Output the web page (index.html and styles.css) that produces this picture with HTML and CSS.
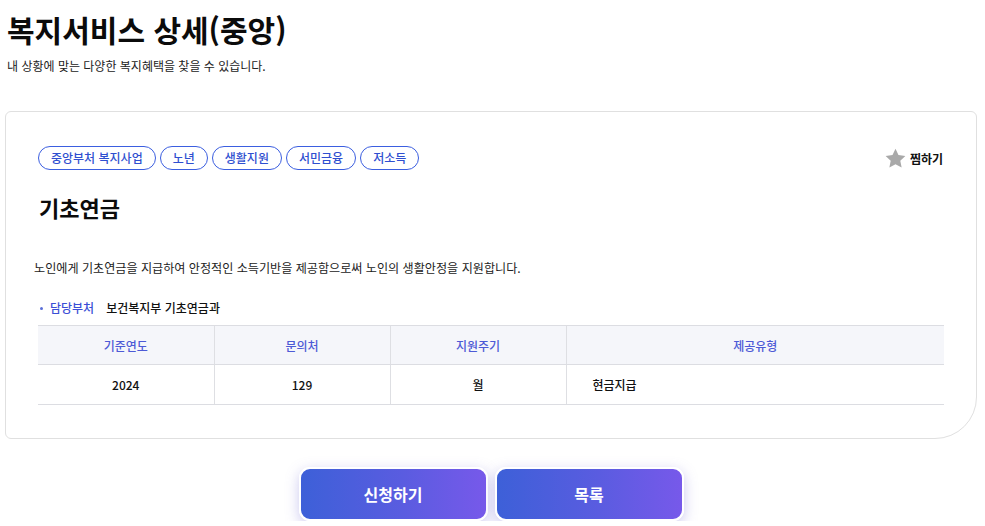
FILE: index.html
```html
<!DOCTYPE html>
<html lang="ko">
<head>
<meta charset="utf-8">
<link rel="stylesheet" href="styles.css">
</head>
<body>
<div class="page">
  <header class="head">
    <h1 class="title">복지서비스 상세(중앙)</h1>
    <p class="subtitle">내 상황에 맞는 다양한 복지혜택을 찾을 수 있습니다.</p>
  </header>
  <section class="card">
    <div class="top-row">
      <ul class="tags">
        <li class="tag">중앙부처 복지사업</li>
        <li class="tag">노년</li>
        <li class="tag">생활지원</li>
        <li class="tag">서민금융</li>
        <li class="tag">저소득</li>
      </ul>
      <button class="fav" type="button">
        <svg class="star" viewBox="0 0 24 24" width="23" height="23"><path d="M12 1.8l3.1 6.6 7.2.9-5.3 5 1.4 7.1L12 17.9l-6.4 3.5 1.4-7.1-5.3-5 7.2-.9z" fill="#a9a9a9"/></svg>
        <span>찜하기</span>
      </button>
    </div>
    <h2 class="name">기초연금</h2>
    <p class="desc">노인에게 기초연금을 지급하여 안정적인 소득기반을 제공함으로써 노인의 생활안정을 지원합니다.</p>
    <div class="dept">
      <span class="dept-label">담당부처</span>
      <span class="dept-value">보건복지부 기초연금과</span>
    </div>
    <table class="info">
      <thead>
        <tr><th>기준연도</th><th>문의처</th><th>지원주기</th><th>제공유형</th></tr>
      </thead>
      <tbody>
        <tr><td>2024</td><td>129</td><td>월</td><td class="left">현금지급</td></tr>
      </tbody>
    </table>
  </section>
  <div class="actions">
    <button class="btn" type="button">신청하기</button>
    <button class="btn" type="button">목록</button>
  </div>
</div>
</body>
</html>
```
FILE: styles.css
```css
* { box-sizing: border-box; }
html, body { margin: 0; padding: 0; background: #fff; }
body {
  font-family: "Noto Sans CJK KR", "Noto Sans", sans-serif;
  color: #111;
}
.page { padding: 0 8px 0 5px; }
.head { padding: 6px 0 0 2px; }
.title {
  margin: 0;
  font-size: 30px;
  line-height: 46px;
  font-weight: 700;
  color: #0b0b0b;
}
.subtitle {
  margin: 5px 0 0;
  font-size: 12px;
  line-height: 17px;
  color: #222;
}
.card {
  margin-top: 37px;
  border: 1px solid #e0e0e0;
  border-radius: 6px 6px 42px 6px;
  padding: 34px 32px 33px 32px;
}
.top-row {
  display: flex;
  align-items: center;
  justify-content: space-between;
}
.tags {
  display: flex;
  gap: 4px;
  list-style: none;
  margin: 0;
  padding: 0;
}
.tag {
  border: 1px solid #3b5ee0;
  border-radius: 12px;
  padding: 0 12px;
  height: 24px;
  line-height: 22px;
  font-size: 12px;
  font-weight: 500;
  color: #2f4fd0;
}
.fav {
  display: flex;
  align-items: center;
  gap: 3px;
  border: 0;
  background: none;
  padding: 0;
  margin-right: 1px;
  font-family: inherit;
  font-size: 12px;
  font-weight: 700;
  color: #111;
}
.name {
  margin: 22px 0 0 1px;
  font-size: 22px;
  line-height: 30px;
  font-weight: 700;
  color: #0b0b0b;
}
.desc {
  margin: 37px 0 0 -4px;
  font-size: 12.1px;
  line-height: 18px;
  color: #222;
}
.dept {
  display: flex;
  align-items: center;
  margin-top: 22px;
  font-size: 12px;
  line-height: 18px;
}
.dept-label {
  position: relative;
  padding-left: 12px;
  font-weight: 500;
  color: #3b4fd6;
}
.dept-label::before {
  content: "";
  position: absolute;
  left: 2px;
  top: 8px;
  width: 3px;
  height: 3px;
  border-radius: 50%;
  background: #5a6fd8;
}
.dept-value {
  margin-left: 12px;
  font-weight: 500;
  color: #111;
}
.info {
  width: 100%;
  margin-top: 8px;
  border-collapse: collapse;
  font-size: 12px;
}
.info th, .info td {
  border-left: 1px solid #dedfe3;
  text-align: center;
}
.info th:first-child, .info td:first-child { border-left: 0; }
.info th {
  height: 39px;
  background: #f5f6fa;
  border-top: 1px solid #dcdde2;
  border-bottom: 1px solid #dcdde2;
  color: #4d5ad6;
  font-weight: 500;
  width: 176px;
}
.info th:last-child { width: auto; }
.info td {
  height: 40px;
  border-bottom: 1px solid #dcdde2;
  font-weight: 500;
  color: #111;
}
.info td.left { text-align: left; padding-left: 26px; }
.actions {
  display: flex;
  justify-content: center;
  gap: 7px;
  margin-top: 28px;
}
.btn {
  width: 189px;
  height: 54px;
  border: 2px solid #fff;
  border-radius: 11px;
  background: linear-gradient(90deg, #3d60d8 0%, #5a5ce0 55%, #7759ea 100%);
  box-shadow: 0 4px 14px rgba(110, 100, 210, 0.35);
  color: #fff;
  font-family: inherit;
  font-size: 16px;
  font-weight: 700;
}
```
